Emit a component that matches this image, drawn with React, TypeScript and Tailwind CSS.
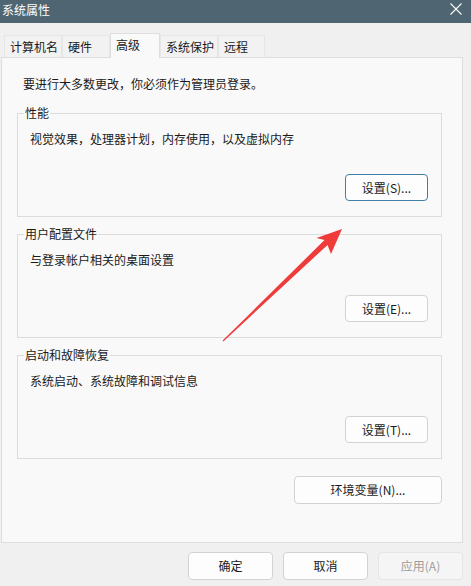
import React from "react";

const font = { fontFamily: '"Noto Sans CJK SC", "Noto Sans", sans-serif' };

function Btn({ label, cls }: { label: string; cls: string }) {
  return (
    <div
      className={`flex items-center justify-center rounded-[4px] border text-[12px] ${cls}`}
    >
      {label}
    </div>
  );
}

function Group({
  title,
  text,
  btn,
  focused,
}: {
  title: string;
  text: string;
  btn: string;
  focused?: boolean;
}) {
  return (
    <div className="relative ml-[15px] h-[104px] w-[425px] border border-[#dcdcdc]">
      <div className="absolute left-[6px] top-[-10px] bg-[#f9f9f9] px-[1px] text-[12px] leading-[18px] text-[#1a1a1a]">
        {title}
      </div>
      <div className="flex h-full flex-col">
        <div className="pl-[12px] pt-[16px] text-[12px] leading-[18px] text-[#1a1a1a]">
          {text}
        </div>
        <div className="flex justify-end pr-[13px] pt-[26px]">
          <Btn
            label={btn}
            cls={`h-[27px] w-[83px] bg-[#fdfdfd] text-[#1a1a1a] ${
              focused ? "border-[#3f7fa8]" : "border-[#d3d3d3]"
            }`}
          />
        </div>
      </div>
    </div>
  );
}

export default function App() {
  const tabs = [
    { t: "计算机名", w: 58 },
    { t: "硬件", w: 48 },
    { t: "高级", w: 50, sel: true },
    { t: "系统保护", w: 58 },
    { t: "远程", w: 47 },
  ];
  return (
    <div
      className="relative h-[586px] w-[471px] overflow-hidden bg-[#f0f0f0]"
      style={font}
    >
      {/* title bar */}
      <div className="flex h-[23px] items-start justify-between bg-[#4f6572]">
        <div className="pl-[2px] pt-[1px] text-[12px] leading-[18px] text-white">
          系统属性
        </div>
        <svg
          width="12"
          height="12"
          viewBox="0 0 12 12"
          className="mr-[9px] mt-[3px]"
        >
          <path d="M0.5 0.5 L11.5 11.5 M11.5 0.5 L0.5 11.5" stroke="#ffffff" strokeWidth="1.1" />
        </svg>
      </div>

      {/* tabs */}
      <div className="flex items-end pl-[4px] pt-[10px]">
        {tabs.map((tab) =>
          tab.sel ? (
            <div
              key={tab.t}
              className="relative z-10 -mb-px flex h-[25px] items-start justify-start border border-b-0 border-[#dedede] bg-[#f9f9f9] pl-[5px] pt-[2px] text-[12px] leading-[18px] text-[#1a1a1a]"
              style={{ width: tab.w }}
            >
              {tab.t}
            </div>
          ) : (
            <div
              key={tab.t}
              className="flex h-[22px] items-start border border-b-0 border-[#e6e6e6] bg-[#f2f2f2] pl-[5px] pt-[2px] text-[12px] leading-[18px] text-[#1a1a1a]"
              style={{ width: tab.w }}
            >
              {tab.t}
            </div>
          )
        )}
      </div>

      {/* panel */}
      <div className="ml-[1px] h-[486px] w-[462px] border border-[#dedede] bg-[#f9f9f9]">
        <div className="pl-[21px] pt-[17px] text-[12px] leading-[18px] text-[#1a1a1a]">
          要进行大多数更改，你必须作为管理员登录。
        </div>
        <div className="mt-[20px] flex flex-col gap-[17px]">
          <Group
            title="性能"
            text="视觉效果，处理器计划，内存使用，以及虚拟内存"
            btn="设置(S)..."
            focused
          />
          <Group
            title="用户配置文件"
            text="与登录帐户相关的桌面设置"
            btn="设置(E)..."
          />
          <Group
            title="启动和故障恢复"
            text="系统启动、系统故障和调试信息"
            btn="设置(T)..."
          />
        </div>
        <div className="flex justify-end pr-[20px] pt-[17px]">
          <Btn
            label="环境变量(N)..."
            cls="h-[28px] w-[148px] border-[#d3d3d3] bg-[#fdfdfd] text-[#1a1a1a]"
          />
        </div>
      </div>

      {/* bottom buttons */}
      <div className="flex justify-end gap-[10px] pr-[8px] pt-[9px]">
        <Btn
          label="确定"
          cls="h-[28px] w-[85px] border-[#d3d3d3] bg-[#fdfdfd] text-[#1a1a1a]"
        />
        <Btn
          label="取消"
          cls="h-[28px] w-[85px] border-[#d3d3d3] bg-[#fdfdfd] text-[#1a1a1a]"
        />
        <Btn
          label="应用(A)"
          cls="h-[28px] w-[85px] border-[#e6e6e6] bg-[#f5f5f5] text-[#9d9d9d]"
        />
      </div>

      {/* red annotation arrow */}
      <svg
        className="pointer-events-none absolute left-0 top-0"
        width="471"
        height="586"
        viewBox="0 0 471 586"
      >
        <polygon
          points="342,229 331,254 327.5,245 223.4,341.4 222.6,340.6 324.5,240 316.5,238"
          fill="#f03b3b"
        />
      </svg>
    </div>
  );
}
